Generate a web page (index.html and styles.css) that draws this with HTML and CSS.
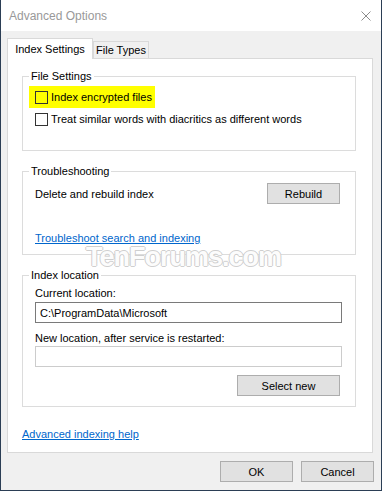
FILE: index.html
```html
<!DOCTYPE html>
<html>
<head>
<meta charset="utf-8">
<title>Advanced Options</title>
<link rel="stylesheet" href="styles.css">
</head>
<body>
<div class="window">
  <div class="titlebar">
    <span class="title">Advanced Options</span>
    <svg class="close" width="10" height="10" viewBox="0 0 10 10"><path d="M0.5 0.5L9.5 9.5M9.5 0.5L0.5 9.5" stroke="#8c8c8c" stroke-width="1"/></svg>
  </div>
  <div class="client">
    <div class="tabs">
      <div class="tab active">Index Settings</div>
      <div class="tab other">File Types</div>
    </div>
    <div class="panel">
      <fieldset class="group g1">
        <legend>File Settings</legend>
        <label class="check hl"><span class="box"></span>Index encrypted files</label>
        <label class="check"><span class="box"></span>Treat similar words with diacritics as different words</label>
      </fieldset>
      <fieldset class="group g2">
        <legend>Troubleshooting</legend>
        <div class="body">
          <div class="row">
            <span>Delete and rebuild index</span>
            <button class="btn">Rebuild</button>
          </div>
          <a class="link tlink" href="#">Troubleshoot search and indexing</a>
        </div>
      </fieldset>
      <fieldset class="group g3">
        <legend>Index location</legend>
        <div class="body">
          <div class="lbl">Current location:</div>
          <div class="field">C:\ProgramData\Microsoft</div>
          <div class="lbl lbl2">New location, after service is restarted:</div>
          <div class="field disabled"></div>
          <div class="btnrow"><button class="btn wide">Select new</button></div>
        </div>
      </fieldset>
      <a class="link help" href="#">Advanced indexing help</a>
    </div>
    <div class="footer">
      <button class="btn">OK</button>
      <button class="btn">Cancel</button>
    </div>
  </div>
  <div class="watermark">TenForums.com</div>
</div>
</body>
</html>
```

FILE: styles.css
```css
* { box-sizing: border-box; }
html, body { margin: 0; padding: 0; background: #ffffff; }
body {
  font-family: "Liberation Sans", Arial, sans-serif;
  font-size: 11px;
  line-height: 16px;
  color: #000000;
}
.window {
  position: relative;
  width: 382px;
  height: 491px;
  background: #f0f0f0;
  border: 1px solid #2b3e55;
  border-top: none;
  display: flex;
  flex-direction: column;
  overflow: hidden;
}
.titlebar {
  flex: none;
  height: 31px;
  background: #ffffff;
  display: flex;
  align-items: center;
  justify-content: space-between;
  padding: 0 10px 0 8px;
}
.title { color: #999999; font-size: 12px; line-height: 14px; }
.close { display: block; }
.client {
  flex: 1;
  display: flex;
  flex-direction: column;
  padding: 7px 7px 0 6px;
}
.tabs {
  display: flex;
  align-items: flex-end;
  height: 20px;
}
.tab {
  display: flex;
  align-items: center;
  justify-content: center;
  border: 1px solid #d9d9d9;
  border-bottom: none;
  background: #f0f0f0;
}
.tab.active {
  position: relative;
  z-index: 1;
  width: 86px;
  height: 21px;
  margin-bottom: -1px;
  background: #ffffff;
  padding-bottom: 1px;
}
.tab.other {
  width: 56px;
  height: 17px;
}
.panel {
  height: 395px;
  margin-right: 1px;
  background: #ffffff;
  border: 1px solid #d9d9d9;
  padding: 9px 16px 0 14px;
  display: flex;
  flex-direction: column;
}
.group {
  margin: 0;
  min-width: 0;
  border: 1px solid #dcdcdc;
  padding: 2px 6px 0 6px;
}
.group legend {
  padding: 0 2px;
  line-height: 16px;
}
.g1 { padding-bottom: 20px; }
.g2 { margin-top: 12px; padding-bottom: 8px; }
.g3 { margin-top: 12px; padding-bottom: 10px; }
.check {
  display: flex;
  align-items: center;
  width: fit-content;
  height: 22px;
  padding: 0 3px 0 6px;
}
.hl { background: #ffff00; }
.box {
  width: 13px;
  height: 13px;
  border: 1px solid #333333;
  margin-right: 3px;
  flex: none;
}
.body {
  display: flex;
  flex-direction: column;
  padding: 0 7px 0 6px;
}
.row {
  margin-top: 2px;
  height: 21px;
  display: flex;
  align-items: center;
  justify-content: space-between;
}
.btn {
  font-family: "Liberation Sans", Arial, sans-serif;
  font-size: 11px;
  color: #000000;
  background: #e1e1e1;
  border: 1px solid #adadad;
  border-radius: 0;
  width: 73px;
  height: 21px;
  padding: 0;
  margin: 0;
}
.row .btn { margin-right: 2px; }
.btn.wide { width: 103px; margin-right: 2px; }
.link {
  color: #0066cc;
  text-decoration: underline;
  width: fit-content;
}
.tlink { margin-top: 26px; }
.lbl { height: 16px; }
.lbl2 { margin-top: 7px; }
.field {
  margin-top: 1px;
  height: 21px;
  border: 1px solid #7a7a7a;
  padding: 0 4px;
  display: flex;
  align-items: center;
}
.field.disabled { margin-top: 0; border-color: #cccccc; }
.btnrow {
  display: flex;
  justify-content: flex-end;
  margin-top: 8px;
}
.help { margin-top: 19px; }
.footer {
  display: flex;
  justify-content: flex-end;
  gap: 8px;
  margin-top: 8px;
}
.watermark {
  position: absolute;
  left: 85px;
  top: 247px;
  font-family: "Liberation Sans", Arial, sans-serif;
  font-weight: bold;
  font-size: 27px;
  line-height: 20px;
  letter-spacing: -1px;
  color: rgba(255, 255, 255, 0.95);
  text-shadow: 1px 0 0 #cfcfcf, -1px 0 0 #cfcfcf, 0 1px 0 #cfcfcf, 0 -1px 0 #cfcfcf;
  pointer-events: none;
}
```
